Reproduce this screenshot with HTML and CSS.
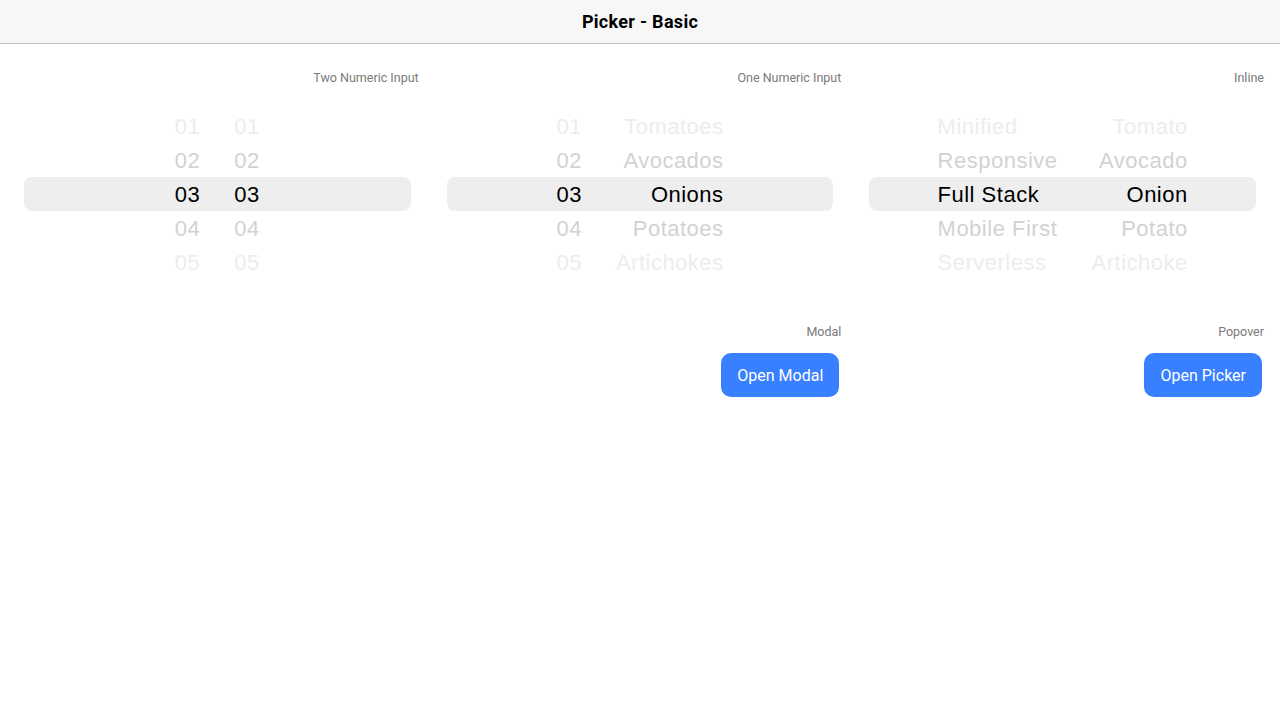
FILE: index.html
```html
<!DOCTYPE html>
<html lang="en">
<head>
<meta charset="utf-8">
<title>Picker - Basic</title>
<link rel="stylesheet" href="styles.css">
</head>
<body>
<header class="toolbar">
  <h1 class="title">Picker - Basic</h1>
</header>
<main class="grid">
  <section class="cell">
    <div class="label">Two Numeric Input</div>
    <div class="picker">
      <div class="col col-start">
        <div class="opt far">01</div>
        <div class="opt near">02</div>
        <div class="opt active">03</div>
        <div class="opt near">04</div>
        <div class="opt far">05</div>
      </div>
      <div class="col col-end">
        <div class="opt far">01</div>
        <div class="opt near">02</div>
        <div class="opt active">03</div>
        <div class="opt near">04</div>
        <div class="opt far">05</div>
      </div>
    </div>
  </section>
  <section class="cell">
    <div class="label">One Numeric Input</div>
    <div class="picker">
      <div class="col col-start">
        <div class="opt far">01</div>
        <div class="opt near">02</div>
        <div class="opt active">03</div>
        <div class="opt near">04</div>
        <div class="opt far">05</div>
      </div>
      <div class="col col-end">
        <div class="opt far">Tomatoes</div>
        <div class="opt near">Avocados</div>
        <div class="opt active">Onions</div>
        <div class="opt near">Potatoes</div>
        <div class="opt far">Artichokes</div>
      </div>
    </div>
  </section>
  <section class="cell">
    <div class="label">Inline</div>
    <div class="picker">
      <div class="col col-start">
        <div class="opt far">Minified</div>
        <div class="opt near">Responsive</div>
        <div class="opt active">Full Stack</div>
        <div class="opt near">Mobile First</div>
        <div class="opt far">Serverless</div>
      </div>
      <div class="col col-end">
        <div class="opt far">Tomato</div>
        <div class="opt near">Avocado</div>
        <div class="opt active">Onion</div>
        <div class="opt near">Potato</div>
        <div class="opt far">Artichoke</div>
      </div>
    </div>
  </section>
  <section class="cell"></section>
  <section class="cell">
    <div class="label">Modal</div>
    <button class="btn" type="button">Open Modal</button>
  </section>
  <section class="cell">
    <div class="label">Popover</div>
    <button class="btn" type="button">Open Picker</button>
  </section>
</main>
</body>
</html>
```
FILE: styles.css
```css
* { box-sizing: border-box; }
html, body {
  margin: 0;
  padding: 0;
  background: #ffffff;
  font-family: Roboto, "Liberation Sans", sans-serif;
  color: #000;
}
.toolbar {
  height: 44px;
  background: #f7f7f7;
  border-bottom: 1px solid #c4c4c4;
  display: flex;
  align-items: center;
  justify-content: center;
}
.title {
  margin: 0;
  font-size: 18px;
  font-weight: 700;
  line-height: 20px;
  letter-spacing: 0.3px;
}
.grid {
  display: grid;
  grid-template-columns: repeat(3, 1fr);
  column-gap: 20px;
  row-gap: 30px;
  padding: 26px 16px;
}
.cell {
  display: flex;
  flex-direction: column;
  min-width: 0;
}
.label {
  text-align: right;
  font-size: 12.5px;
  line-height: 16px;
  color: #7a7a7a;
}
.picker {
  position: relative;
  height: 200px;
  margin-top: 8px;
  padding: 16px 0 14px;
  display: flex;
  justify-content: center;
  gap: 34px;
  font-family: "Liberation Sans", Arial, sans-serif;
  font-size: 22px;
  letter-spacing: 0.5px;
}
.picker::before {
  content: "";
  position: absolute;
  left: 8px;
  right: 8px;
  top: 83px;
  height: 34px;
  background: #eeeeee;
  border-radius: 8px;
}
.col {
  position: relative;
  display: flex;
  flex-direction: column;
}
.col-start { text-align: left; }
.col-end { text-align: right; }
.opt {
  height: 34px;
  line-height: 34px;
  white-space: nowrap;
}
.opt.active { color: #000; }
.opt.near { color: #d2d2d2; }
.opt.far { color: #ededed; }
.btn {
  align-self: flex-end;
  margin: 13px 2px 0 0;
  height: 44px;
  padding: 0 16px;
  border: none;
  border-radius: 10px;
  background: #3880ff;
  color: #fff;
  font-family: Roboto, "Liberation Sans", sans-serif;
  font-size: 16px;
}
```
